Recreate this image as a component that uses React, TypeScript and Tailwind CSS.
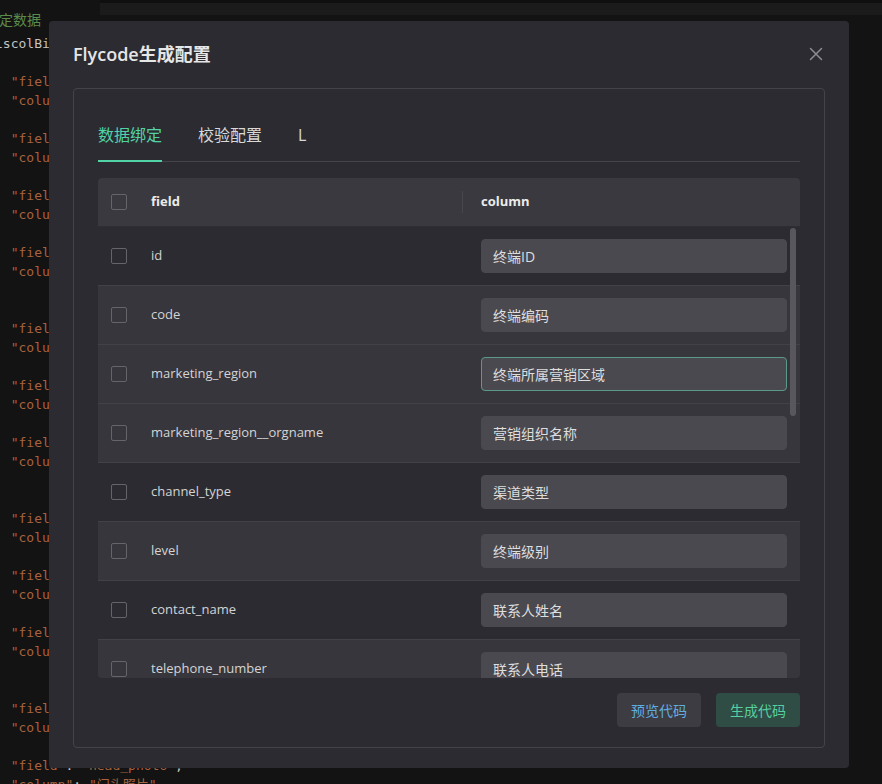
import React from 'react';

type Row = { field: string; column: string; shade: 'dark' | 'light'; focus?: boolean };

const rows: Row[] = [
  { field: 'id', column: '终端ID', shade: 'dark' },
  { field: 'code', column: '终端编码', shade: 'light' },
  { field: 'marketing_region', column: '终端所属营销区域', shade: 'light', focus: true },
  { field: 'marketing_region__orgname', column: '营销组织名称', shade: 'light' },
  { field: 'channel_type', column: '渠道类型', shade: 'dark' },
  { field: 'level', column: '终端级别', shade: 'light' },
  { field: 'contact_name', column: '联系人姓名', shade: 'dark' },
  { field: 'telephone_number', column: '联系人电话', shade: 'light' },
];

const records = [
  ['id', '终端ID'],
  ['code', '终端编码'],
  ['marketing_region', '终端所属营销区域'],
  ['marketing_region__orgname', '营销组织名称'],
  ['channel_type', '渠道类型'],
  ['level', '终端级别'],
  ['contact_name', '联系人姓名'],
  ['telephone_number', '联系人电话'],
  ['address', '详细地址'],
  ['longitude', '经度'],
  ['latitude', '纬度'],
  ['head_photo', '门头照片'],
];

const mono = { fontFamily: '"DejaVu Sans Mono", "Noto Sans CJK SC", monospace' };

const Str = ({ children }: { children: React.ReactNode }) => <span className="text-[#a8623f]">{children}</span>;

// brace lines sit mostly off-screen, only a sliver shows at the left edge
const Brace = ({ ch }: { ch: string }) => <div className="-ml-[6px] text-[#9a9a9a]">{ch}</div>;

const CodeBackground: React.FC = () => {
  const lines: React.ReactNode[] = [];
  records.forEach(([f, c], i) => {
    lines.push(
      <div key={`f${i}`}>
        {'  '}<Str>"field"</Str>: <Str>"{f}"</Str>,
      </div>
    );
    lines.push(
      <div key={`c${i}`}>
        {'  '}<Str>"column"</Str>: <Str>"{c}"</Str>
      </div>
    );
    if (i === 3 || i === 6 || i === 9) {
      lines.push(<Brace key={`a${i}`} ch="}" />);
      lines.push(<Brace key={`b${i}`} ch="{" />);
    } else {
      lines.push(<Brace key={`s${i}`} ch="}" />);
    }
  });
  return (
    <div className="text-[13px] leading-[19px] text-[#c4c4c4] whitespace-pre" style={mono}>
      <div className="pt-[11px] -ml-[15px] text-[14px] text-[#5c8a4a]">绑定数据</div>
      <div className="mt-[4px] -ml-[5px]">lscolBindData: [</div>
      <div className="-ml-[5px]"> </div>
      <div className="-ml-[5px]">{lines}</div>
    </div>
  );
};

const Checkbox: React.FC = () => (
  <div className="w-[16px] h-[16px] rounded-[2px] border border-[#656469]" />
);

const App: React.FC = () => {
  return (
    <div
      className="relative w-[882px] h-[784px] overflow-hidden bg-[#131313]"
      style={{ fontFamily: '"Open Sans", "Noto Sans CJK SC", sans-serif' }}
    >
      {/* editor behind the dialog */}
      <div className="absolute left-[100px] right-0 top-0 h-[15px] bg-[#1b1b1b] border-t-[3px] border-[#0f0f0f]" />
      <CodeBackground />

      {/* Dialog */}
      <div className="absolute left-[49px] top-[21px] w-[800px] h-[747px] rounded-[4px] bg-[#2c2b31] px-[24px] pt-[20px] pb-[20px] flex flex-col">
        <div className="flex items-center justify-between h-[26px]">
          <h2 className="text-[18px] font-semibold text-[#e6e6e6] leading-[26px]">Flycode生成配置</h2>
          <svg width="14" height="14" viewBox="0 0 14 14" className="mr-[2px]">
            <path d="M1.5 1.5 L12.5 12.5 M12.5 1.5 L1.5 12.5" stroke="#8d8c92" strokeWidth="1.5" strokeLinecap="round" />
          </svg>
        </div>

        <div className="mt-[21px] flex-1 flex flex-col rounded-[4px] border border-[#44434a] pl-[24px] pr-[24px] pt-[34px] pb-[19px]">
          {/* Tabs */}
          <div className="flex gap-[36px] border-b border-[#45444b] text-[16px] leading-[24px]">
            <div className="pb-[13px] -mb-px border-b-2 border-[#52d3a6] text-[#52d3a6]">数据绑定</div>
            <div className="pb-[13px] text-[#d8d8d8]">校验配置</div>
            <div className="pb-[13px] text-[#d8d8d8]">L</div>
          </div>

          {/* Table */}
          <div className="mt-[16px] h-[500px] rounded-[4px] overflow-hidden flex flex-col bg-[#2c2b31]">
            <div className="h-[49px] shrink-0 flex items-center bg-[#3a393f] border-b border-[#2e2d33] text-[13px] font-bold text-[#ececec]">
              <div className="w-[53px] pl-[13px]">
                <Checkbox />
              </div>
              <div className="w-[311px]">field</div>
              <div className="w-px h-[22px] bg-[#47464c]" />
              <div className="pl-[18px]">column</div>
            </div>
            <div className="relative flex-1 overflow-hidden">
              {rows.map((r) => (
                <div
                  key={r.field}
                  className={
                    'h-[59px] flex items-center border-b border-[#424147] ' +
                    (r.shade === 'dark' ? 'bg-[#2c2b31]' : 'bg-[#37363c]')
                  }
                >
                  <div className="w-[53px] pl-[13px]">
                    <Checkbox />
                  </div>
                  <div className="w-[330px] text-[13px] text-[#d4d4d4]">{r.field}</div>
                  <div className="flex-1 pr-[13px]">
                    <div
                      className={
                        'h-[34px] rounded-[4px] bg-[#4a494f] flex items-center px-[11px] text-[14px] text-[#dedede] border ' +
                        (r.focus ? 'border-[#5b9a88]' : 'border-[#4a494f]')
                      }
                    >
                      {r.column}
                    </div>
                  </div>
                </div>
              ))}
              <div className="absolute right-[4px] top-[1px] w-[6px] h-[188px] rounded-full bg-[#58575d]" />
            </div>
          </div>

          {/* Footer */}
          <div className="mt-[15px] flex justify-end gap-[15px] text-[14px]">
            <button className="w-[84px] h-[34px] rounded-[4px] bg-[#3d3c42] text-[#5faee0]">预览代码</button>
            <button className="w-[84px] h-[34px] rounded-[4px] bg-[#2f4d45] text-[#56d0a0]">生成代码</button>
          </div>
        </div>
      </div>
    </div>
  );
};

export default App;
